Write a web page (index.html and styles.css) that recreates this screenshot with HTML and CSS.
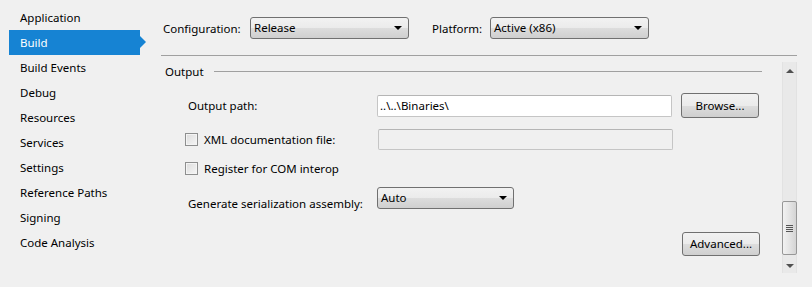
FILE: index.html
```html
<!DOCTYPE html>
<html lang="en">

<head>
    <meta charset="UTF-8">
    <meta name="viewport" content="width=device-width, initial-scale=1.0">
    <title>Project Properties - Build</title>
    <link rel="stylesheet" href="styles.css">
</head>

<body>

    <div class="page">
        <!-- Left tab list -->
        <ul class="sidebar">
            <li class="tab">Application</li>
            <li class="tab active">Build</li>
            <li class="tab">Build Events</li>
            <li class="tab">Debug</li>
            <li class="tab">Resources</li>
            <li class="tab">Services</li>
            <li class="tab">Settings</li>
            <li class="tab">Reference Paths</li>
            <li class="tab">Signing</li>
            <li class="tab">Code Analysis</li>
        </ul>

        <div class="main">
            <!-- Configuration / platform bar -->
            <div class="toolbar">
                <span class="label label-config">Configuration:</span>
                <div class="combo combo-config">Release<span class="caret"></span></div>
                <span class="label label-platform">Platform:</span>
                <div class="combo combo-platform">Active (x86)<span class="caret"></span></div>
            </div>

            <div class="scroll-area">
                <div class="panel">
                    <div class="group-header">
                        <span>Output</span>
                        <span class="group-line"></span>
                    </div>

                    <div class="row row-path">
                        <span class="field-label">Output path:</span>
                        <div class="textbox">..\..\Binaries\</div>
                        <div class="button">Browse...</div>
                    </div>

                    <div class="row row-xml">
                        <span class="check"></span>
                        <span class="check-label">XML documentation file:</span>
                        <div class="textbox disabled"></div>
                    </div>

                    <div class="row row-com">
                        <span class="check"></span>
                        <span class="check-label">Register for COM interop</span>
                    </div>

                    <div class="row row-serial">
                        <span class="field-label low">Generate serialization assembly:</span>
                        <div class="combo combo-auto">Auto<span class="caret"></span></div>
                    </div>

                    <div class="row row-advanced">
                        <div class="button">Advanced...</div>
                    </div>
                </div>

                <!-- Vertical scrollbar -->
                <div class="scrollbar">
                    <span class="arrow-up"></span>
                    <div class="thumb"><span class="grip"></span></div>
                    <span class="arrow-down"></span>
                </div>
            </div>
        </div>
    </div>

</body>

</html>
```

FILE: styles.css
```css
body {
    margin: 0;
    background-color: #f0f0f0;
    font-family: "Noto Sans", "Open Sans", sans-serif;
    font-size: 11.5px;
    color: #000;
}

.page {
    display: flex;
    width: 812px;
    height: 287px;
}

/* Left tab list */
.sidebar {
    list-style: none;
    margin: 0;
    padding: 5px 0 0 9px;
    width: 137px;
}

.tab {
    height: 25px;
    line-height: 25px;
    padding-left: 11px;
    width: 120px;
}

.tab.active {
    position: relative;
    background-color: #1683d3;
    color: #fff;
}

/* the little pointer next to the active tab */
.tab.active::after {
    content: "";
    position: absolute;
    right: -6px;
    top: 6px;
    border-top: 6px solid transparent;
    border-bottom: 6px solid transparent;
    border-left: 6px solid #1683d3;
}

.main {
    flex: 1;
    padding: 0 15px;
    display: flex;
    flex-direction: column;
}

.toolbar {
    display: flex;
    align-items: center;
    padding: 17px 0 16px 2px;
    border-bottom: 1px solid #a0a0a0;
}

.label-config {
    width: 87px;
}

.label-platform {
    width: 58px;
    margin-left: 23px;
}

/* Combo boxes */
.combo {
    position: relative;
    box-sizing: border-box;
    height: 22px;
    line-height: 20px;
    padding-left: 3px;
    border: 1px solid #707070;
    border-radius: 3px;
    background: linear-gradient(#f2f2f2 0%, #ebebeb 50%, #dddddd 51%, #cfcfcf 100%);
}

.combo-config,
.combo-platform {
    width: 159px;
}

.combo-auto {
    width: 137px;
}

.caret {
    position: absolute;
    right: 6px;
    top: 8px;
    border-left: 4px solid transparent;
    border-right: 4px solid transparent;
    border-top: 4px solid #000;
}

.scroll-area {
    flex: 1;
    display: flex;
}

.panel {
    flex: 1;
    padding: 7px 20px 0 4px;
}

.group-header {
    display: flex;
    align-items: center;
    height: 16px;
    gap: 10px;
}

.group-line {
    flex: 1;
    height: 1px;
    background-color: #a0a0a0;
}

/* Form rows */
.row {
    display: flex;
    align-items: center;
    padding-left: 23px;
}

.row-path {
    height: 25px;
    margin-top: 14px;
}

.row-xml {
    height: 21px;
    margin-top: 11px;
}

.row-com {
    height: 16px;
    margin-top: 10px;
}

.row-serial {
    height: 22px;
    margin-top: 11px;
}

.row-advanced {
    height: 24px;
    margin-top: 23px;
    justify-content: flex-end;
    padding-right: 2px;
}

.field-label {
    width: 189px;
}

.field-label.low {
    margin-top: 10px;
}

.check {
    box-sizing: border-box;
    width: 13px;
    height: 13px;
    margin-left: -3px;
    margin-right: 6px;
    border: 1px solid #8e8f8f;
    background: linear-gradient(135deg, #dcdcdc, #f6f6f6);
    box-shadow: inset 0 0 0 1px #f4f4f4;
}

.check-label {
    width: 174px;
}

.textbox {
    box-sizing: border-box;
    width: 295px;
    height: 22px;
    line-height: 20px;
    padding-left: 2px;
    background-color: #fff;
    border: 1px solid #c5c5c5;
    border-top-color: #b5b5b5;
    border-radius: 2px;
}

.textbox.disabled {
    height: 21px;
    background-color: #f0f0f0;
}

.button {
    box-sizing: border-box;
    width: 78px;
    height: 25px;
    line-height: 23px;
    margin-left: 9px;
    text-align: center;
    border: 1px solid #707070;
    border-radius: 3px;
    background: linear-gradient(#f2f2f2 0%, #ebebeb 50%, #dddddd 51%, #cfcfcf 100%);
}

.row-advanced .button {
    height: 24px;
    line-height: 22px;
}

/* Scrollbar */
.scrollbar {
    box-sizing: border-box;
    width: 15px;
    height: 211px;
    margin-top: 6px;
    display: flex;
    flex-direction: column;
    align-items: center;
    background-color: #e9e9e9;
    border-left: 1px solid #e2e2e2;
    border-right: 1px solid #e2e2e2;
}

.arrow-up {
    margin-top: 7px;
    border-left: 4px solid transparent;
    border-right: 4px solid transparent;
    border-bottom: 4px solid #505050;
}

.arrow-down {
    margin-top: 9px;
    border-left: 4px solid transparent;
    border-right: 4px solid transparent;
    border-top: 4px solid #505050;
}

.thumb {
    box-sizing: border-box;
    width: 15px;
    height: 54px;
    margin-top: 128px;
    display: flex;
    align-items: center;
    justify-content: center;
    border: 1px solid #979797;
    border-radius: 2px;
    background: linear-gradient(90deg, #f2f2f2, #e4e4e4 50%, #d4d4d4);
}

.grip {
    width: 7px;
    height: 7px;
    background: repeating-linear-gradient(#555 0, #555 1px, transparent 1px, transparent 2px);
}
```
